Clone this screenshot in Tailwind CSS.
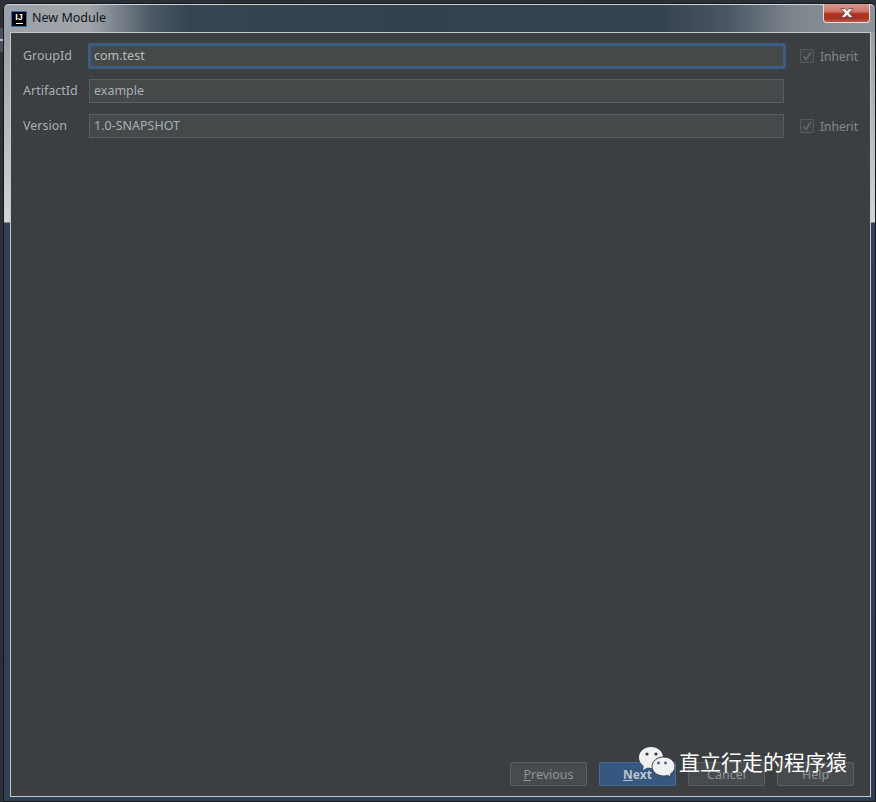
<!DOCTYPE html>
<html><head><meta charset="utf-8">
<script src="https://cdn.jsdelivr.net/npm/@tailwindcss/browser@4"></script>
<title>New Module</title></head>
<body class="m-0 bg-[#2a3036]">
<div class="relative h-[802px] w-[876px] overflow-hidden pt-[3px] pl-[3px] font-['Noto_Sans','Liberation_Sans','Noto_Sans_CJK_SC',sans-serif] text-[12.5px] text-[#a9b0b6]">
  <div class="absolute top-[28px] left-0 h-[24px] w-[3px] bg-[#47525c]"></div>
  <div class="absolute top-[39px] left-0 h-[2px] w-[3px] bg-[#b9bdc0]"></div>
  <div class="relative flex h-[799px] w-[873px] flex-col rounded-t-[6px] border border-[#14181b] bg-[linear-gradient(180deg,#8f969b_0,#d3d6d8_218px,#2f4254_219px,#2d4051_100%)] pb-[4px]">
    <div class="flex h-[28px] shrink-0 items-center gap-[5px] rounded-t-[5px] border-t border-[#d0d4d7] bg-[linear-gradient(90deg,#9ba1a6_0,#9fa5a9_85px,#7f8890_110px,#4d5a66_145px,#364553_185px,#34424f_400px,#36444f_660px,#4a5763_725px,#7f878e_790px,#8c9399_100%)] pl-[7px]">
      <div class="flex h-[16px] w-[16px] shrink-0 flex-col items-center border border-[#2e6fb8] bg-black">
        <span class="font-['Liberation_Sans',sans-serif] text-[9px] leading-[10px] font-bold text-white">IJ</span>
        <span class="mt-[1px] h-[1px] w-[7px] bg-white"></span>
      </div>
      <span class="-mt-[1px] text-[12.5px] text-[#10161b]">New Module</span>
    </div>
    <div class="mr-[4px] ml-[6px] flex min-h-0 flex-1 flex-col justify-between border border-[#c3c8cc] bg-[#3c3f41] pb-[10px]">
      <div class="flex flex-col gap-[11px] pt-[11px] pl-[12px]">
        <div class="flex h-[24px] items-center">
          <span class="w-[65px] shrink-0">GroupId</span>
          <div class="flex h-[26px] w-[698px] shrink-0 items-center rounded-[2px] border-[3px] border-[#3b5d80] bg-[#45494a] pl-[3px] text-[#bbbbbb]">com.test</div>
          <div class="ml-[14px] flex items-center gap-[6px] text-[12px] text-[#83898e]">
            <span class="flex h-[14px] w-[14px] items-center justify-center rounded-[1px] border border-[#565a5c] bg-[#3f4345]"><svg width="12" height="12" viewBox="0 0 12 12" fill="none"><path d="M2.5 6.5 L5 9.5 L9.5 2.5" stroke="#62676a" stroke-width="1.6"/></svg></span>
            <span class="mt-[2px]">Inherit</span>
          </div>
        </div>
        <div class="flex h-[24px] items-center">
          <span class="w-[66px] shrink-0">ArtifactId</span>
          <div class="flex h-[24px] w-[695px] shrink-0 items-center border border-[#5a5e60] bg-[#45494a] pl-[4px]">example</div>
        </div>
        <div class="flex h-[24px] items-center">
          <span class="w-[66px] shrink-0">Version</span>
          <div class="flex h-[24px] w-[695px] shrink-0 items-center border border-[#5a5e60] bg-[#45494a] pl-[4px]">1.0-SNAPSHOT</div>
          <div class="ml-[16px] flex items-center gap-[6px] text-[12px] text-[#83898e]">
            <span class="flex h-[14px] w-[14px] items-center justify-center rounded-[1px] border border-[#565a5c] bg-[#3f4345]"><svg width="12" height="12" viewBox="0 0 12 12" fill="none"><path d="M2.5 6.5 L5 9.5 L9.5 2.5" stroke="#62676a" stroke-width="1.6"/></svg></span>
            <span class="mt-[2px]">Inherit</span>
          </div>
        </div>
      </div>
      <div class="flex justify-end gap-[12px] pr-[16px]">
        <div class="flex h-[24px] w-[77px] items-center justify-center rounded-[2px] border border-[#5c6062] bg-[#474b4d] pt-[2px] text-[#8f9599]"><span><span class="underline">P</span>revious</span></div>
        <div class="flex h-[24px] w-[77px] items-center justify-center rounded-[2px] border border-[#4a6c92] bg-[#365880] pt-[2px] text-[12px] font-bold text-[#bcc4cc]"><span><span class="underline">N</span>ext</span></div>
        <div class="flex h-[24px] w-[77px] items-center justify-center rounded-[2px] border border-[#5c6062] bg-[#474b4d] pt-[2px] text-[#8f9599]">Cancel</div>
        <div class="flex h-[24px] w-[77px] items-center justify-center rounded-[2px] border border-[#5c6062] bg-[#474b4d] pt-[2px] text-[#8f9599]">Help</div>
      </div>
    </div>
    <div class="absolute top-[0px] right-[5px] flex h-[19px] w-[47px] items-center justify-center rounded-b-[4px] border border-t-0 border-[#e6dcdc] bg-[linear-gradient(180deg,#d8968c_0,#cf7a6c_40%,#b5321c_55%,#a63423_80%,#bc5a4a_100%)]">
      <svg width="14" height="10" viewBox="0 0 14 10"><path d="M1 0.5 H5 L7 2.8 L9 0.5 H13 L9.2 5 L13 9.5 H9 L7 7.2 L5 9.5 H1 L4.8 5 Z" fill="#f2f2f2" stroke="#4b3a3a" stroke-width="0.7"/></svg>
    </div>
  </div>
  <div class="absolute top-[745px] left-[639px] flex items-start">
    <svg width="36" height="36" viewBox="0 0 36 36"><path d="M12 2 C5.4 2 0 6.6 0 12.5 C0 16 2 19 4.8 21 L4 25 L8.5 22.6 C9.6 22.9 10.8 23 12 23 C18.6 23 24 18.4 24 12.5 C24 6.6 18.6 2 12 2 Z" fill="#f0f0f0"/><circle cx="8" cy="9" r="1.6" fill="#33393d"/><circle cx="17" cy="9" r="1.6" fill="#33393d"/><path d="M24.5 12 C30.8 12 36 16 36 21.5 C36 24.8 34 27.4 31.5 29 L32 32 L28.5 30.4 C27.2 30.8 25.9 31 24.5 31 C18.2 31 13 26.8 13 21.5 C13 16.2 18.2 12 24.5 12 Z" fill="#eef0f2" stroke="#3c3f41" stroke-width="1"/><circle cx="19.5" cy="18" r="1.4" fill="#3f5f80"/><circle cx="26.5" cy="18" r="1.4" fill="#3f5f80"/></svg>
    <span class="-mt-[2px] ml-[4px] font-['Noto_Sans_CJK_SC',sans-serif] text-[21px] leading-[36px] text-white">直立行走的程序猿</span>
  </div>
</div>
</body></html>
